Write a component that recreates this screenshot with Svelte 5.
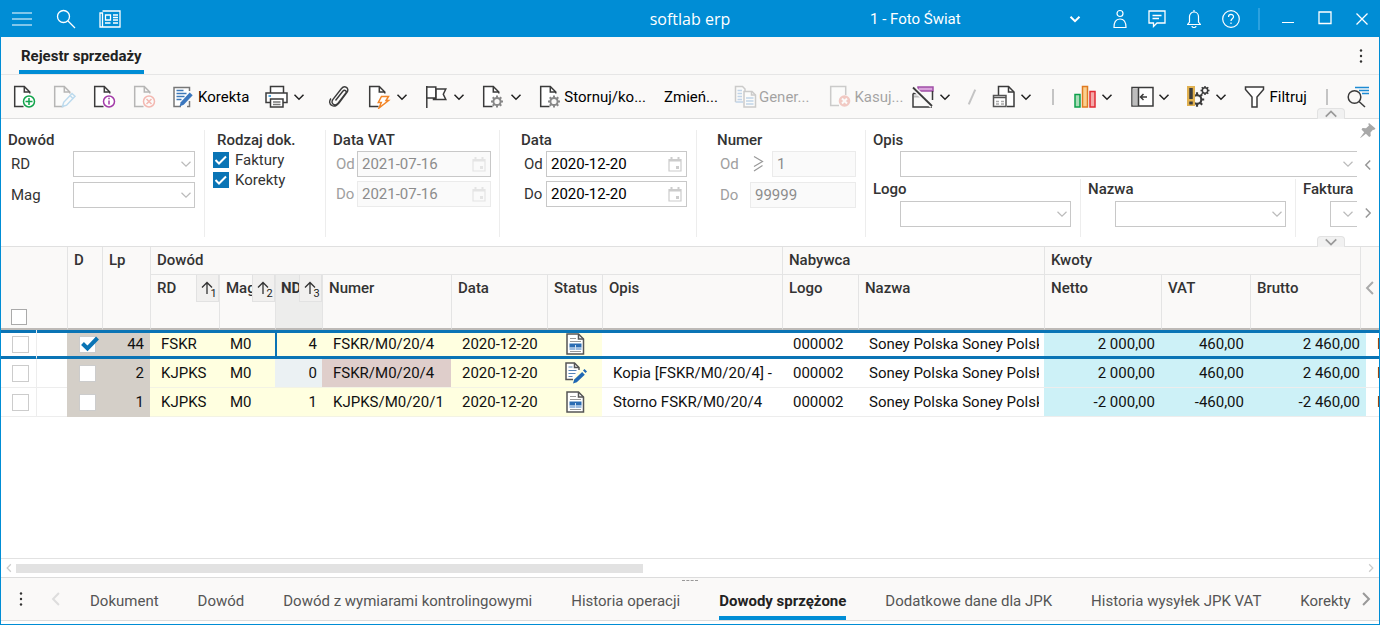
<script lang="ts">
	interface Tool {
		id: string;
		icon?: string;
		label?: string;
		title: string;
		menu?: boolean;
		disabled?: boolean;
		kind?: string;
	}

	interface Row {
		id: number;
		marked: boolean;
		lp: number;
		rd: string;
		mag: string;
		nd: number;
		numer: string;
		data: string;
		status: string;
		opis: string;
		logo: string;
		nazwa: string;
		netto: string;
		vat: string;
		brutto: string;
	}

	const tools: Tool[] = [
		{ id: 'new', icon: 'doc-add', title: 'Nowy' },
		{ id: 'edit', icon: 'doc-edit', title: 'Edytuj', disabled: true },
		{ id: 'info', icon: 'doc-info', title: 'Informacje' },
		{ id: 'delete', icon: 'doc-delete', title: 'Usuń', disabled: true },
		{ id: 'korekta', icon: 'note', label: 'Korekta', title: 'Korekta' },
		{ id: 'print', icon: 'printer', title: 'Drukuj', menu: true, kind: 'roomy' },
		{ id: 'attach', icon: 'clip', title: 'Załączniki' },
		{ id: 'run', icon: 'doc-bolt', title: 'Operacje', menu: true },
		{ id: 'flag', icon: 'flag', title: 'Oznacz', menu: true },
		{ id: 'gear', icon: 'doc-gear', title: 'Przetwarzanie', menu: true },
		{ id: 'storno', icon: 'doc-gear', label: 'Stornuj/ko...', title: 'Stornuj/kopiuj' },
		{ id: 'change', label: 'Zmień...', title: 'Zmień' },
		{ id: 'gener', icon: 'copy', label: 'Gener...', title: 'Generuj', disabled: true },
		{ id: 'kasuj', icon: 'box-delete', label: 'Kasuj...', title: 'Kasuj', disabled: true, kind: 'tight' },
		{ id: 'window', icon: 'window', title: 'Okno', menu: true },
		{ id: 'sep1', title: '/', kind: 'sep' },
		{ id: 'report', icon: 'report', title: 'Raporty', menu: true },
		{ id: 'sep2', title: '|', kind: 'sep' },
		{ id: 'chart', icon: 'chart', title: 'Wykresy', menu: true },
		{ id: 'panel', icon: 'panel', title: 'Panel', menu: true },
		{ id: 'alert', icon: 'alert', title: 'Ustawienia', menu: true },
		{ id: 'filter', icon: 'funnel', label: 'Filtruj', title: 'Filtruj' },
		{ id: 'sep3', title: '|', kind: 'sep' },
		{ id: 'find', icon: 'find', title: 'Szukaj' }
	];

	const rows: Row[] = $state([
		{ id: 1, marked: true, lp: 44, rd: 'FSKR', mag: 'M0', nd: 4, numer: 'FSKR/M0/20/4', data: '2020-12-20', status: 'posted', opis: '', logo: '000002', nazwa: 'Soney Polska Soney Polska', netto: '2 000,00', vat: '460,00', brutto: '2 460,00' },
		{ id: 2, marked: false, lp: 2, rd: 'KJPKS', mag: 'M0', nd: 0, numer: 'FSKR/M0/20/4', data: '2020-12-20', status: 'draft', opis: 'Kopia [FSKR/M0/20/4] -', logo: '000002', nazwa: 'Soney Polska Soney Polska', netto: '2 000,00', vat: '460,00', brutto: '2 460,00' },
		{ id: 3, marked: false, lp: 1, rd: 'KJPKS', mag: 'M0', nd: 1, numer: 'KJPKS/M0/20/1', data: '2020-12-20', status: 'posted', opis: 'Storno FSKR/M0/20/4', logo: '000002', nazwa: 'Soney Polska Soney Polska', netto: '-2 000,00', vat: '-460,00', brutto: '-2 460,00' }
	]);

	const tabs = [
		'Dokument',
		'Dowód',
		'Dowód z wymiarami kontrolingowymi',
		'Historia operacji',
		'Dowody sprzężone',
		'Dodatkowe dane dla JPK',
		'Historia wysyłek JPK VAT',
		'Korekty'
	];

	let selected = $state(1);
	let activeTab = $state('Dowody sprzężone');
	let faktury = $state(true);
	let korekty = $state(true);
	let dateFrom = $state('2020-12-20');
	let dateTo = $state('2020-12-20');
</script>

{#snippet chevron(dir = 'down', size = 12)}
	<svg class="chev {dir}" width={size} height={size} viewBox="0 0 12 12" aria-hidden="true">
		<path d="M1.5 3.8 6 8.2l4.500-4.400" />
	</svg>
{/snippet}

{#snippet dots()}
	<svg width="4" height="16" viewBox="0 0 4 16" fill="#333" aria-hidden="true">
		<circle cx="2" cy="2.500" r="1.200" /><circle cx="2" cy="8" r="1.200" /><circle cx="2" cy="13.500" r="1.200" />
	</svg>
{/snippet}

{#snippet tick()}
	<svg class="tick" width="16" height="16" viewBox="0 0 16 16" fill="none" stroke="#fff" stroke-width="2" aria-hidden="true"><path d="m2.500 8 3.500 3.500 7-7" /></svg>
{/snippet}

{#snippet page()}
	<path d="M1.700 1.500h9.600v5.500h5.500v14.500H1.700z" fill="#fff" stroke="none" />
	<path d="M10.500 21.500H1.700v-20h9.600l5.500 5.500v1.500M11.300 1.500V7h5.500" stroke="#3b3b3b" fill="none" />
{/snippet}

{#snippet gear(x: number, y: number, s: number)}
	<g transform="translate({x} {y}) scale({s})">
		<circle r="3.600" fill="#faf9f8" />
		<path d="M0-6v2.200M0 3.800V6M-6 0h2.200M3.800 0H6M-4.300-4.300l1.600 1.600M2.700 2.700l1.600 1.600M-4.300 4.300l1.600-1.600M2.700-2.700l1.600-1.600" />
	</g>
{/snippet}

{#snippet icon(name: string)}
	<svg width="24" height="24" viewBox="0 0 24 24" fill="none" stroke="#3b3b3b" stroke-width="1.500" aria-hidden="true">
		{#if name === 'doc-add'}
			{@render page()}
			<circle cx="16" cy="16.500" r="5.500" fill="#fff" stroke="#12a44c" />
			<path d="M16 13v7M12.500 16.500h7" stroke="#12a44c" />
		{:else if name === 'doc-edit'}
			{@render page()}
			<path d="m9.500 21.500 1.200-4.200L19 8.500l3 2.800-8.400 8.900z" fill="#fff" stroke="#4aa3dc" />
			<path d="m17 10.500 3 3" stroke="#4aa3dc" />
		{:else if name === 'doc-info'}
			{@render page()}
			<circle cx="16" cy="16.500" r="5.500" fill="#fff" stroke="#a33ba8" />
			<path d="M16 15.500v4M16 12.700v1.600" stroke="#a33ba8" />
		{:else if name === 'doc-delete'}
			{@render page()}
			<circle cx="16" cy="16.500" r="5.500" fill="#fff" stroke="#e8412f" />
			<path d="m13.500 14 5 5m0-5-5 5" stroke="#e8412f" />
		{:else if name === 'note'}
			<path d="M8 21.500H1v-19h15.500V6M16.500 16v5.500H14" stroke="#777" fill="#fff" />
			<path d="M3.500 5.500h7M3.500 8.500h10M3.500 11.500h8M3.500 14.500h5" stroke="#3d78b8" />
			<path d="m6.500 21.500 1.200-4.300 9-9.700 3 2.800-9 9.400z" fill="#3b77be" stroke="none" />
		{:else if name === 'printer'}
			<path d="M5.500 8V1.500h13V8" fill="#fff" />
			<path d="M5.500 17.500H1V8h21v9.500h-4.500" fill="#fff" />
			<path d="M5.500 14h12.500v8H5.500z" fill="#fff" />
			<path d="M8 17h7.500M8 19.500h7.500" stroke="#777" />
			<path d="M3.500 11h2.500" stroke="#1d8bd3" />
		{:else if name === 'clip'}
			<path d="m7.500 15.500 7.300-9.200c1.800-2.200 4.400-.2 2.900 2l-7.600 9.800c-3 3.700-8 .7-5.300-3.500l8.500-10.800c3.200-4.100 8.600-.7 5.700 3.600l-7.800 10.300c-2.800 3.500-5 4.200-7.300 2.800-2.800-1.700-2.800-4.300-1-7" stroke-width="1.400" />
		{:else if name === 'doc-bolt'}
			{@render page()}
			<path d="M13.500 11.500h7l-2.500 4h2.500L11 23l2.300-5.500h-3z" fill="#fff" stroke="#f28527" />
		{:else if name === 'flag'}
			<path d="M10.800 4h10l-2.500 5.300 2.500 5.200H8.500V13h2.300z" fill="#fff" />
			<path d="M1.800 1v22" />
			<path d="M1.800 2h9v11h-9z" fill="#fff" />
		{:else if name === 'doc-gear'}
			{@render page()}
			<g stroke="#888" stroke-width="2">{@render gear(15, 16.500, 1)}</g>
		{:else if name === 'copy'}
			<path d="M1.500 17V1.500h7L11 4v3" fill="#fff" stroke="#777" />
			<path d="M1.500 17H9M3.500 5.500H8M3.500 8.500H8M3.500 11.500H8M3.500 14.500H8" stroke="#5a92cc" />
			<path d="M10 6.500h8l3.500 3.500v12H10z" fill="#fff" stroke="#777" />
			<path d="M17.500 6.500V10h4" stroke="#777" />
			<path d="M12 13h7.500M12 16h7.500M12 19h7.500" stroke="#5a92cc" />
		{:else if name === 'box-delete'}
			<path d="M10 20.500H1.700v-19h15V10" fill="#fff" stroke="#777" />
			<circle cx="15.500" cy="16" r="5.800" fill="#e27262" stroke="none" />
			<path d="m13 13.500 5 5m0-5-5 5" stroke="#fff" stroke-width="2" />
		{:else if name === 'window'}
			<path d="M7 2h15v4H7z" fill="#d9a3dc" stroke="#a04fa6" />
			<path d="M21.500 6v9M2 8.500h5M2 8.500V22h19" />
			<path d="M3 10.500h11v2H3z" fill="#bbb" stroke="none" />
			<path d="m2 2.500 19 18.500" stroke="#faf9f8" stroke-width="5" />
			<path d="m2 2.500 19 18.500" stroke-width="1.800" />
		{:else if name === 'report'}
			<path d="M6.500 10V1.500h10L22 7v14.500h-7" fill="#fff" />
			<path d="M16.500 1.500V7H22" />
			<path d="M1.500 10.500h12.500v11H1.500z" fill="#fff" stroke="#555" />
			<path d="M1.500 12.500h12.500" stroke="#555" />
			<path d="M4 16.500h3M9 16.500h3M4 19h3M9 19h3" stroke="#aaa" />
		{:else if name === 'chart'}
			<path d="M2 9.500h5V22H2z" fill="#a8dcb8" stroke="#0ca04a" />
			<path d="M9.500 1.500h5V22h-5z" fill="#fbd08f" stroke="#e07b22" />
			<path d="M17 6.500h5V22h-5z" fill="#f5a9a9" stroke="#e02b35" />
		{:else if name === 'panel'}
			<path d="M2 2.500h21v18.500H2z" fill="#fff" />
			<path d="M2.500 3.500h5.500v17H2.500z" fill="#bdbdbd" stroke="none" />
			<path d="M8.500 2.500V21M17 12h-6.500m3-3-3 3 3 3" />
		{:else if name === 'alert'}
			<g stroke-width="1.800">{@render gear(10, 14.500, 1.200)}</g>
			<g stroke-width="2">{@render gear(18, 5.500, 0.750)}</g>
			<path d="M0 1h8v20H0z" fill="#e0b04f" stroke="none" />
			<path d="M4 3v11M4 16.500v3" stroke-width="3.500" />
		{:else if name === 'funnel'}
			<path d="M1.500 2h18v2.500l-6.500 7.500v10H8V12L1.500 4.500z" fill="#fff" />
		{:else if name === 'find'}
			<path d="M8 2.500h14M12 5.500h10M15 8.500h7" stroke="#1d8bd3" />
			<circle cx="7.500" cy="12" r="6.300" fill="#faf9f8" />
			<path d="m12 16.500 6 5.500" />
		{/if}
	</svg>
{/snippet}

{#snippet dropdown(id: string, label: string)}
	<span class="dropdown">
		<select {id} aria-label={label}><option value=""></option></select>
		{@render chevron()}
	</span>
{/snippet}

{#snippet calendar()}
	<svg class="calendar" width="14" height="15" viewBox="0 0 14 15" fill="none" stroke="currentColor" aria-hidden="true">
		<path d="M1 2.500h12v11.500H1z" stroke-width="1.200" /><path d="M1 3.500h12M3.500 0v3M10.500 0v3" stroke-width="2" />
		<path d="M8 9h3v3H8z" fill="currentColor" stroke="none" />
	</svg>
{/snippet}

{#snippet statusIcon(kind: string)}
	<svg width="24" height="22" viewBox="0 0 24 22" fill="none" stroke="#555" stroke-width="1.500" aria-hidden="true">
		{#if kind === 'posted'}
			<path d="M4 1h11.500l5 5v15H4z" fill="#fff" /><path d="M15.500 1v5h5" />
			<path d="M7 5.500h6M7 8.500h11" stroke="#999" stroke-width="1" />
			<path d="M6.500 10.500h12v4h-12z" fill="#2b6cb3" stroke="none" />
			<path d="M6.500 14.500h12v2.500h-12z" fill="#9dbce0" stroke="none" /><path d="M12.500 12v5" stroke="#cfe0f2" stroke-width="1" />
			<path d="M7 18.500h11" stroke="#999" stroke-width="1" />
		{:else}
			<path d="M10 17.500H3V1h8.500L16 5.500V8" fill="#fff" /><path d="M11.500 1v4.500H16" />
			<path d="M5.500 5h4M5.500 8.500h8M5.500 11.500h7M5.500 14.500h4" stroke="#5585b5" stroke-width="1" />
			<path d="m10 21.500 1.200-4 8-7.500 2.600 2.700-8 7.500z" fill="#2068b4" stroke="none" />
			<path d="m20 8.500 1.500-1.500 2.500 2.600-1.500 1.500z" fill="#2068b4" stroke="none" />
		{/if}
	</svg>
{/snippet}

{#snippet sortButton(order: number)}
	<button type="button" class="sort" aria-label="Sortowanie {order}">
		<svg width="14" height="16" viewBox="0 0 14 16" fill="none" stroke="#333" stroke-width="1.300" aria-hidden="true">
			<path d="M7 14V2.500M2 7.500l5-5 5 5" />
		</svg>
		<sub>{order}</sub>
	</button>
{/snippet}

<div class="window">
	<header class="titlebar">
		<div class="title-left">
			<button type="button" aria-label="Menu">
				<svg width="20" height="14" viewBox="0 0 20 14" stroke="#fff" stroke-width="1.200"><path d="M0 1h20M0 7h20M0 13h20" /></svg>
			</button>
			<button type="button" aria-label="Szukaj">
				<svg width="20" height="20" viewBox="0 0 20 20" fill="none" stroke="#fff" stroke-width="1.300"><circle cx="7.500" cy="7.500" r="6" /><path d="m12 12 7 7" /></svg>
			</button>
			<button type="button" aria-label="Wiadomości">
				<svg width="22" height="18" viewBox="0 0 22 18" fill="none" stroke="#fff" stroke-width="1.300">
					<path d="M3.500 1H21v16H1V3h2.500v14" /><path d="M6.500 5h5v5h-5zM14 5h5M14 7.500h5M14 10h5M6 13h5.500M14 13h5" />
				</svg>
			</button>
		</div>
		<span class="app-name">softlab erp</span>
		<div class="title-right">
			<span class="company">
				<select aria-label="Firma"><option>1 - Foto Świat</option></select>
				{@render chevron()}
			</span>
			<button type="button" aria-label="Użytkownik">
				<svg width="14" height="20" viewBox="0 0 14 20" fill="none" stroke="#fff" stroke-width="1.200"><circle cx="7" cy="4.500" r="3" /><path d="M1 18.500c0-5 1.500-8.500 6-8.500s6 3.500 6 8.500z" /></svg>
			</button>
			<button type="button" aria-label="Czat">
				<svg width="18" height="18" viewBox="0 0 18 18" fill="none" stroke="#fff" stroke-width="1.300"><path d="M1 1h16v12H9l-3.500 3.500V13H1z" /><path d="M4.500 5.500h9M4.500 8.500h6.500" /></svg>
			</button>
			<button type="button" aria-label="Powiadomienia">
				<svg width="14" height="18" viewBox="0 0 14 18" fill="none" stroke="#fff" stroke-width="1.200"><path d="M.5 14.500 2.500 12V6.500a4.500 4.500 0 0 1 9 0V12l2 2.500zM5 16a2 1.500 0 0 0 4 0M7 0v2" /></svg>
			</button>
			<button type="button" aria-label="Pomoc">
				<svg width="18" height="18" viewBox="0 0 18 18" fill="none" stroke="#fff" stroke-width="1.200"><circle cx="9" cy="9" r="8.300" /><path d="M6.500 7c0-3.500 5-3.300 5-.3C11.500 8.800 9 8.800 9 11M9 12.500V14" /></svg>
			</button>
			<span class="title-sep"></span>
			<button type="button" aria-label="Minimalizuj">
				<svg width="14" height="14" viewBox="0 0 14 14" stroke="#fff"><path d="M1 10.500h12" /></svg>
			</button>
			<button type="button" aria-label="Maksymalizuj">
				<svg width="14" height="16" viewBox="0 0 14 16" fill="none" stroke="#fff" stroke-width="1.300"><path d="M1 1h12v11.500H1z" /></svg>
			</button>
			<button type="button" aria-label="Zamknij">
				<svg width="12" height="12" viewBox="0 0 12 12" stroke="#fff" stroke-width="1.300"><path d="m.5.5 11 11m0-11-11 11" /></svg>
			</button>
		</div>
	</header>

	<div class="page-tabs">
		<h1>Rejestr sprzedaży</h1>
		<button type="button" class="more" aria-label="Więcej">{@render dots()}</button>
	</div>

	<div class="toolbar">
		{#each tools as tool (tool.id)}
			{#if tool.kind === 'sep'}
				<span class="tool-sep" class:slanted={tool.title === '/'}></span>
			{:else}
				<button
					type="button"
					class="tool {tool.kind ?? ''}"
					class:split={tool.menu}
					class:text-only={!tool.icon}
					title={tool.title}
					disabled={tool.disabled}
				>
					{#if tool.icon}{@render icon(tool.icon)}{/if}
					{#if tool.label}<span>{tool.label}</span>{/if}
					{#if tool.menu}{@render chevron()}{/if}
				</button>
			{/if}
		{/each}
		<button type="button" class="collapse" aria-label="Zwiń pasek">{@render chevron('up', 14)}</button>
	</div>

	<form class="filters" onsubmit={(e) => e.preventDefault()}>
		<section class="f-dowod">
			<h2>Dowód</h2>
			<div class="field"><label for="rd">RD</label>{@render dropdown('rd', 'RD')}</div>
			<div class="field"><label for="mag">Mag</label>{@render dropdown('mag', 'Mag')}</div>
		</section>
		<section class="f-kind">
			<h2>Rodzaj dok.</h2>
			<label class="check"><input type="checkbox" bind:checked={faktury} />{@render tick()}Faktury</label>
			<label class="check"><input type="checkbox" bind:checked={korekty} />{@render tick()}Korekty</label>
		</section>
		<section class="f-date off">
			<h2>Data VAT</h2>
			<div class="field"><label for="vat-od">Od</label><span class="date framed"><input id="vat-od" value="2021-07-16" disabled />{@render calendar()}</span></div>
			<div class="field"><label for="vat-do">Do</label><span class="date"><input id="vat-do" value="2021-07-16" disabled />{@render calendar()}</span></div>
		</section>
		<section class="f-date wide">
			<h2>Data</h2>
			<div class="field"><label for="data-od">Od</label><span class="date"><input id="data-od" bind:value={dateFrom} />{@render calendar()}</span></div>
			<div class="field"><label for="data-do">Do</label><span class="date"><input id="data-do" bind:value={dateTo} />{@render calendar()}</span></div>
		</section>
		<section class="f-number off">
			<h2>Numer</h2>
			<div class="field">
				<label for="nr-od">Od</label>
				<svg width="22" height="18" viewBox="0 0 22 18" fill="none" stroke="#999" stroke-width="1.200" aria-hidden="true"><path d="m4 1.500 8.500 5-8.500 5M12.500 10.500 4 16" /></svg>
				<input id="nr-od" value="1" disabled />
			</div>
			<div class="field"><label for="nr-do">Do</label><input id="nr-do" value="99999" disabled /></div>
		</section>
		<div class="f-rest">
			<section class="f-opis">
				<h2>Opis</h2>
				{@render dropdown('opis', 'Opis')}
			</section>
			<div class="f-row">
				<section><h2>Logo</h2>{@render dropdown('logo', 'Logo')}</section>
				<section><h2>Nazwa</h2>{@render dropdown('nazwa', 'Nazwa')}</section>
				<section class="last"><h2>Faktura</h2>{@render dropdown('faktura', 'Faktura')}</section>
			</div>
		</div>
		<div class="f-side">
			<button type="button" aria-label="Przypnij">
				<svg width="16" height="16" viewBox="0 0 16 16" fill="#a8a8a8"><path d="m9 1 6.500 5.500-1.500 1.500-1-.3-2.500 2.800.2 3.500-1.500 1-3.300-3.300L.5 16l-.3-.3 4-5.500L1.500 7.500l1-1.500 3.500.2L9 3.500 8.300 2z" /></svg>
			</button>
			<button type="button" aria-label="Poprzednie">{@render chevron('left', 12)}</button>
			<button type="button" aria-label="Następne">{@render chevron('right', 12)}</button>
		</div>
		<button type="button" class="collapse" aria-label="Zwiń filtry">{@render chevron('down', 14)}</button>
	</form>

	<main class="grid">
		<table>
			<colgroup>
				<col class="w36" /><col class="w30" /><col class="w35" /><col class="w48" /><col class="w69" /><col class="w56" />
				<col class="w47" /><col class="w129" /><col class="w96" /><col class="w55" /><col /><col class="w76" />
				<col class="w186" /><col class="w117" /><col class="w89" /><col class="w110" /><col class="w6" /><col class="w13" />
			</colgroup>
			<thead>
				<tr class="groups">
					<th colspan="2" rowspan="2" class="pick"><input type="checkbox" class="box" aria-label="Zaznacz wszystkie" /></th>
					<th rowspan="2">D</th>
					<th rowspan="2">Lp</th>
					<th colspan="7">Dowód</th>
					<th colspan="2">Nabywca</th>
					<th colspan="3">Kwoty</th>
					<th colspan="2" rowspan="2" class="scroll"><button type="button" aria-label="Przewiń">{@render chevron('left', 16)}</button></th>
				</tr>
				<tr class="cols">
					<th><div class="sortable"><span>RD</span>{@render sortButton(1)}</div></th>
					<th><div class="sortable"><span>Mag</span>{@render sortButton(2)}</div></th>
					<th class="active"><div class="sortable"><span>ND</span>{@render sortButton(3)}</div></th>
					<th>Numer</th>
					<th>Data</th>
					<th>Status</th>
					<th>Opis</th>
					<th>Logo</th>
					<th>Nazwa</th>
					<th>Netto</th>
					<th>VAT</th>
					<th>Brutto</th>
				</tr>
			</thead>
			<tbody>
				{#each rows as row (row.id)}
					<tr class:selected={selected === row.id} onclick={() => (selected = row.id)}>
						<td class="pick"><input type="checkbox" class="box" aria-label="Zaznacz wiersz {row.lp}" /></td>
						<td></td>
						<td class="mark">
							<label>
								<input type="checkbox" class="box" bind:checked={row.marked} aria-label="D {row.lp}" />
								{#if row.marked}
									<svg width="18" height="16" viewBox="0 0 18 16" fill="none" stroke="#0a74b5" stroke-width="4" aria-hidden="true"><path d="m1.500 7.500 5 5L16.500 2" /></svg>
								{/if}
							</label>
						</td>
						<td class="mark num">{row.lp}</td>
						<td class="doc">{row.rd}</td>
						<td class="doc">{row.mag}</td>
						<td class="doc num" class:focus={selected === row.id} class:zero={row.nd === 0}>{row.nd}</td>
						<td class="doc" class:warn={row.nd === 0}>{row.numer}</td>
						<td class="doc">{row.data}</td>
						<td class="doc status">{@render statusIcon(row.status)}</td>
						<td>{row.opis}</td>
						<td>{row.logo}</td>
						<td><div class="clip">{row.nazwa}</div></td>
						<td class="sum">{row.netto}</td>
						<td class="sum">{row.vat}</td>
						<td class="sum" colspan="2">{row.brutto}</td>
						<td>N</td>
					</tr>
				{/each}
			</tbody>
		</table>
	</main>

	<div class="scrollbar">
		{@render chevron('left', 10)}
		<div class="track"><div class="thumb"></div></div>
		{@render chevron('right', 10)}
	</div>

	<nav class="bottom-tabs">
		<span class="grip"></span>
		<button type="button" class="menu" aria-label="Lista zakładek">{@render dots()}</button>
		<button type="button" class="prev" aria-label="Poprzednia zakładka">{@render chevron('left', 16)}</button>
		<div class="tabs">
			{#each tabs as tab (tab)}
				<button type="button" class:current={activeTab === tab} onclick={() => (activeTab = tab)}>{tab}</button>
			{/each}
		</div>
		<button type="button" class="after" aria-label="Następna zakładka">{@render chevron('right', 16)}</button>
	</nav>
</div>

<style>
	:global(body) {
		margin: 0;
	}
	.window {
		box-sizing: border-box;
		min-height: 100vh;
		display: flex;
		flex-direction: column;
		border: 1px solid #008dd5;
		border-top: none;
		background: #fff;
		color: #333;
		font-family: Roboto, 'Liberation Sans', sans-serif;
		font-size: 15px;
		line-height: 20px;
	}
	button,
	input,
	select {
		font: inherit;
		color: inherit;
		box-sizing: border-box;
	}
	button {
		background: none;
		border: none;
		padding: 0;
		display: flex;
		align-items: center;
		justify-content: center;
		flex: none;
	}
	svg {
		flex: none;
		display: block;
	}
	h1,
	h2 {
		margin: 0;
		font-size: 15px;
	}
	h2 {
		font-weight: 500;
	}
	.chev {
		fill: none;
		stroke: currentColor;
		stroke-width: 1.5;
	}
	.chev.up {
		transform: rotate(180deg);
	}
	.chev.left {
		transform: rotate(90deg);
	}
	.chev.right {
		transform: rotate(-90deg);
	}

	.titlebar {
		display: grid;
		grid-template-columns: 1fr auto 1fr;
		align-items: center;
		height: 37px;
		margin: 0 -1px;
		background: #008dd5;
		color: #fff;
	}
	.title-left,
	.title-right {
		display: flex;
		align-items: center;
	}
	.title-left button {
		width: 44px;
	}
	.app-name {
		font-family: 'Open Sans', 'Noto Sans', sans-serif;
		font-size: 16px;
	}
	.title-right {
		justify-content: flex-end;
	}
	.title-right button {
		width: 37px;
	}
	.company {
		display: flex;
		align-items: center;
		position: relative;
		width: 215px;
		margin-right: 20px;
	}
	.company select {
		appearance: none;
		width: 100%;
		padding: 0 4px;
		border: none;
		background: transparent;
	}
	.company .chev {
		position: absolute;
		right: 0;
		stroke-width: 2;
		pointer-events: none;
	}
	.title-sep {
		width: 2px;
		height: 22px;
		margin: 0 9px;
		background: #2ba1df;
	}

	.page-tabs {
		display: flex;
		justify-content: space-between;
		height: 37px;
		padding: 0 16px 0 18px;
		border-bottom: 1px solid #e6e6e6;
		background: #faf9f8;
	}
	h1 {
		box-sizing: border-box;
		padding: 9px 2px 0;
		height: 37px;
		border-bottom: 4px solid #008dd5;
		font-weight: 700;
		color: #222;
	}

	.toolbar {
		display: flex;
		align-items: center;
		position: relative;
		height: 43px;
		padding-left: 4px;
		border-bottom: 1px solid #dedede;
		background: #faf9f8;
		color: #000;
	}
	.tool {
		gap: 1px;
		height: 32px;
		padding: 0 8px;
		white-space: nowrap;
	}
	.tool.split {
		gap: 4px;
		padding-right: 9px;
	}
	.tool .chev {
		color: #222;
	}
	.tool.roomy {
		margin-right: 6px;
	}
	.tool.tight {
		padding-left: 12px;
		padding-right: 0;
	}
	.tool.text-only {
		padding-left: 10px;
	}
	.tool:disabled {
		color: #000;
		opacity: 0.35;
	}
	.tool-sep {
		flex: none;
		width: 2px;
		height: 16px;
		margin: 0 11px;
		background: #c4c4c4;
	}
	.tool-sep.slanted {
		transform: rotate(24deg);
	}
	.collapse {
		position: absolute;
		right: 34px;
		bottom: -1px;
		width: 28px;
		height: 11px;
		border: 1px solid #e2e2e2;
		border-bottom: none;
		border-radius: 4px 4px 0 0;
		background: #f1f1f1;
		color: #999;
	}

	.filters {
		display: flex;
		position: relative;
		padding: 11px 0 9px;
		border-bottom: 1px solid #e0e0e0;
	}
	.filters > section {
		box-sizing: border-box;
		flex: none;
		min-height: 107px;
		padding: 0 9px;
		border-right: 1px solid #ededed;
	}
	.filters h2 {
		padding-bottom: 1px;
		color: #333;
	}
	.field {
		display: flex;
		align-items: center;
		margin-bottom: 4px;
	}
	.f-dowod .field,
	.f-number .field {
		margin-bottom: 5px;
	}
	.field > label {
		flex: 1;
		padding-left: 3px;
	}
	.off label {
		color: #a0a0a0;
	}
	.filters input:not([type='checkbox']),
	.dropdown select {
		height: 26px;
		padding: 0 4px;
		border: 1px solid #c8c8c8;
		border-radius: 0;
		background: #fff;
	}
	.filters input:not([type='checkbox']) {
		color: #000;
	}
	.filters .off input {
		border-color: #ebebeb;
		background: #fafafa;
		color: #8c8c8c;
	}
	.filters .off .framed input {
		border-color: #c8c8c8;
	}
	.dropdown {
		display: flex;
		align-items: center;
		position: relative;
		width: 122px;
	}
	.dropdown select {
		appearance: none;
		width: 100%;
	}
	.dropdown .chev {
		position: absolute;
		right: 3px;
		color: #bbb;
		stroke-width: 1.2;
		pointer-events: none;
	}
	.filters > .f-dowod {
		width: 204px;
		padding-left: 7px;
	}
	.filters > .f-kind {
		width: 121px;
		padding-left: 8px;
	}
	.filters .f-kind h2 {
		padding: 0 0 0 4px;
	}
	.check {
		display: flex;
		align-items: center;
		position: relative;
		gap: 6px;
	}
	.check input {
		appearance: none;
		width: 16px;
		height: 16px;
		margin: 0;
		border: 1px solid #0a74b5;
	}
	.check input:checked {
		background: #0a74b5;
	}
	.tick {
		position: absolute;
		left: 0;
	}
	.filters > .f-date {
		width: 174px;
		padding-left: 7px;
		padding-right: 8px;
	}
	.filters > .f-date.wide {
		width: 197px;
		padding-left: 21px;
		padding-right: 9px;
	}
	.date {
		display: flex;
		align-items: center;
		position: relative;
		width: 134px;
	}
	.wide .date {
		width: 141px;
	}
	.date input {
		width: 100%;
	}
	.calendar {
		position: absolute;
		right: 5px;
		color: #ccc;
	}
	.off .calendar {
		color: #e4e4e4;
	}
	.filters > .f-number {
		width: 169px;
		padding-left: 20px;
	}
	.f-number input {
		width: 106px;
	}
	.f-number svg + input {
		width: 84px;
	}
	.f-rest {
		flex: 1;
		min-width: 0;
		overflow: hidden;
	}
	.f-rest section {
		padding-left: 7px;
	}
	.f-rest .dropdown {
		width: auto;
		margin-left: 27px;
	}
	.f-opis select {
		border-right: none;
	}
	.f-row {
		display: flex;
		padding-top: 2px;
	}
	.f-row h2 {
		padding-bottom: 2px;
	}
	.f-row section {
		box-sizing: border-box;
		flex: none;
		width: 215px;
		min-height: 58px;
		padding-right: 9px;
		border-right: 1px solid #ededed;
	}
	.f-row .last {
		flex: 1;
		width: auto;
		min-width: 0;
		padding-right: 0;
		border-right: none;
	}
	.f-row .last select {
		border-right: none;
	}
	.f-side {
		display: grid;
		grid-template-rows: 16px 54px 42px;
		width: 22px;
		margin-top: -8px;
		color: #999;
	}

	.grid {
		flex: 1;
		overflow: hidden;
	}
	table {
		width: 100%;
		table-layout: fixed;
		border-collapse: separate;
		border-spacing: 0;
	}
	.w6 { width: 6px; }
	.w13 { width: 13px; }
	.w30 { width: 30px; }
	.w35 { width: 35px; }
	.w36 { width: 36px; }
	.w47 { width: 47px; }
	.w48 { width: 48px; }
	.w55 { width: 55px; }
	.w56 { width: 56px; }
	.w69 { width: 69px; }
	.w76 { width: 76px; }
	.w89 { width: 89px; }
	.w96 { width: 96px; }
	.w110 { width: 110px; }
	.w117 { width: 117px; }
	.w129 { width: 129px; }
	.w186 { width: 186px; }
	th {
		box-sizing: border-box;
		padding: 3px 0 0 6px;
		border-left: 1px solid #e4e4e4;
		background: #faf9f8;
		font-weight: 500;
		text-align: left;
		vertical-align: top;
		overflow: hidden;
		white-space: nowrap;
	}
	.groups th {
		height: 28px;
		border-bottom: 1px solid #e4e4e4;
	}
	.groups th[rowspan='2'],
	.cols th {
		border-bottom: 2px solid #bdbab7;
	}
	.cols th {
		height: 55px;
	}
	th.pick {
		padding: 0 0 3px 10px;
		border-left: none;
		vertical-align: bottom;
	}
	th.scroll {
		padding: 33px 0 0 1px;
	}
	th.scroll button {
		color: #aaa;
	}
	.sortable {
		display: flex;
		margin-top: -3px;
	}
	.sortable span {
		flex: 1;
		min-width: 0;
		padding-top: 3px;
		overflow: hidden;
	}
	.sort {
		align-items: flex-end;
		width: 23px;
		height: 27px;
		padding-bottom: 5px;
		border: 1px solid #e2e2e2;
		border-top: none;
		background: #f1f0ef;
	}
	.sort sub {
		margin: 0 -2px -4px -4px;
		font-size: 11px;
		line-height: 12px;
		font-weight: 400;
		color: #222;
	}
	.cols .active {
		padding-left: 5px;
		background: #ededec;
		font-weight: 700;
	}
	.box {
		display: block;
		appearance: none;
		width: 16px;
		height: 16px;
		margin: 0;
		border: 1px solid #aaa;
		background: #fff;
	}
	td {
		box-sizing: border-box;
		height: 29px;
		padding: 0 0 0 11px;
		border-bottom: 1px solid #ededed;
		color: #111;
		white-space: nowrap;
		overflow: hidden;
	}
	td .box {
		width: 17px;
		height: 17px;
		border-color: #ccc;
	}
	td.pick {
		border-right: 1px solid #ededed;
	}
	td.mark {
		border-bottom-color: #d4cfc8;
		background: #d4cfc8;
	}
	.mark label {
		display: block;
		position: relative;
		padding-left: 1px;
	}
	.mark label svg {
		position: absolute;
		left: 3px;
		top: 0;
	}
	td.doc {
		border-bottom-color: #f3f3e4;
		background: #ffffe0;
	}
	td.num,
	td.sum {
		padding: 0 6px 0 0;
		text-align: right;
	}
	td.num.doc {
		padding-right: 5px;
	}
	td.zero {
		background: #ebf1f3;
	}
	td.warn {
		background: #dfcecb;
	}
	td.status {
		padding: 0 0 0 16px;
	}
	td.sum {
		background: #cdf1f7;
	}
	.clip {
		margin-right: 5px;
		overflow: hidden;
	}
	.selected td {
		border-bottom-color: #0a74b5;
		box-shadow: inset 0 3px #0a74b5, inset 0 -2px #0a74b5;
	}
	.selected td.focus {
		box-shadow: inset 0 3px #0a74b5, inset 0 -2px #0a74b5, inset 2px 0 #0a74b5;
	}

	.scrollbar {
		display: flex;
		align-items: center;
		gap: 2px;
		height: 18px;
		padding: 0 3px;
		border-top: 1px solid #e2e2e2;
		color: #ccc;
	}
	.track {
		flex: 1;
	}
	.thumb {
		width: 46.5%;
		height: 9px;
		background: #e2e2e2;
	}

	.bottom-tabs {
		display: flex;
		position: relative;
		height: 42px;
		margin-bottom: 3px;
		border-top: 1px solid #dcdcdc;
		border-bottom: 1px solid #dcdcdc;
		background: #faf9f8;
		color: #555;
	}
	.grip {
		position: absolute;
		left: 50%;
		top: 2px;
		width: 16px;
		margin-left: -8px;
		border-top: 1px dashed #999;
	}
	.menu {
		width: 40px;
	}
	.prev {
		width: 30px;
		color: #ddd;
	}
	.tabs {
		flex: 1;
		display: flex;
		gap: 39px;
		min-width: 0;
		padding-left: 19px;
		overflow: hidden;
	}
	.tabs button {
		padding-top: 8px;
		border-bottom: 4px solid transparent;
		white-space: nowrap;
	}
	.tabs .current {
		border-bottom-color: #008dd5;
		font-weight: 700;
		color: #222;
	}
	.after {
		width: 27px;
		color: #999;
	}
</style>
